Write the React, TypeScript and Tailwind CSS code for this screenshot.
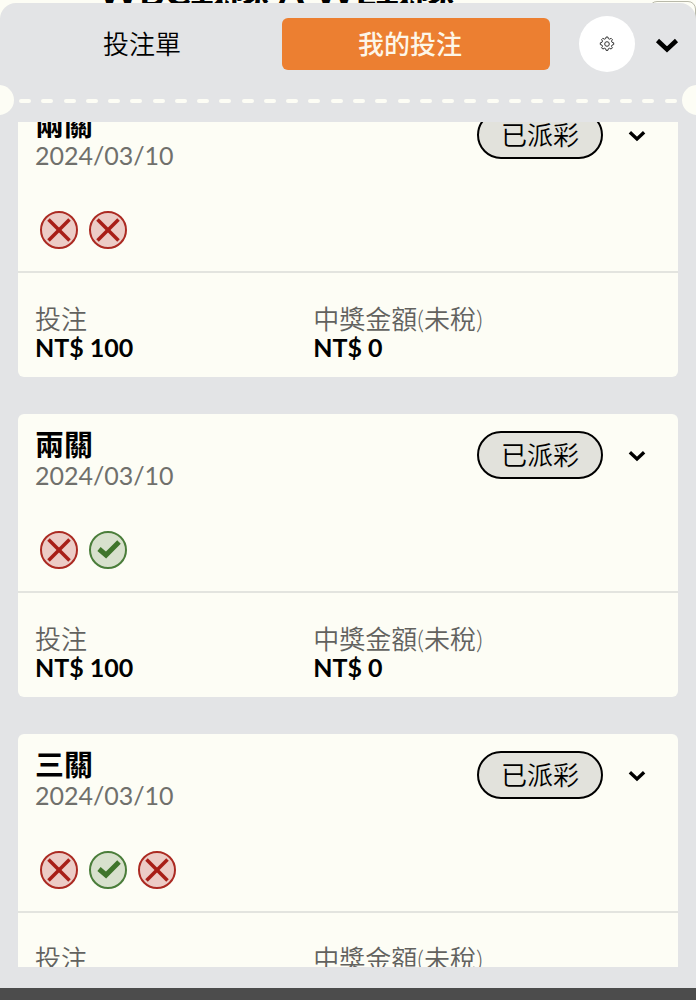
import { X } from "lucide-react";

type Result = "win" | "lose";

const bets: { title: string; date: string; stake: number; payout: number; results: Result[] }[] = [
  { title: "兩關", date: "2024/03/10", stake: 100, payout: 0, results: ["lose", "lose"] },
  { title: "兩關", date: "2024/03/10", stake: 100, payout: 0, results: ["lose", "win"] },
  { title: "三關", date: "2024/03/10", stake: 100, payout: 0, results: ["lose", "win", "lose"] },
];

function Chevron({ className }: { className: string }) {
  return (
    <svg viewBox="0 0 24 15" className={className} fill="none" stroke="currentColor" aria-hidden="true">
      <path d="M2.500 2.500l9.500 9 9.500-9" strokeWidth="4.500" />
    </svg>
  );
}

function GearIcon() {
  return (
    <svg viewBox="0 0 16 16" className="h-4 w-4" fill="none" stroke="#333" strokeWidth="1" aria-hidden="true">
      <circle cx="8" cy="8" r="2.3" />
      <path
        d="M7.1 1h1.8l.4 1.600 1.400.6 1.400-.9 1.300 1.300-.9 1.400.6 1.400 1.600.4v1.800l-1.600.4-.6 1.400.9 1.400-1.300 1.300-1.400-.9-1.400.6-.4 1.600H7.100l-.4-1.600-1.400-.6-1.400.9-1.300-1.300.9-1.400-.6-1.400L1.300 8.600V6.800l1.600-.4.6-1.400-.9-1.400 1.300-1.300 1.400.9 1.400-.6z"
        strokeLinejoin="round"
      />
    </svg>
  );
}

function ResultBadge({ result }: { result: Result }) {
  if (result === "win") {
    return (
      <li className="flex h-[38px] w-[38px] items-center justify-center rounded-full border-2 border-[#4a7d3a] bg-[#d8e1cd] text-[#3f752b]">
        <svg viewBox="0 0 34 34" className="h-[34px] w-[34px]" fill="none" stroke="currentColor" strokeWidth="5" aria-label="過關">
          <path d="M8 16l7 6L28 9" />
        </svg>
      </li>
    );
  }
  return (
    <li className="flex h-[38px] w-[38px] items-center justify-center rounded-full border-2 border-[#ab2a22] bg-[#ecccc6] text-[#a81e17]">
      <X className="h-[42px] w-[42px] shrink-0" strokeWidth={2} strokeLinecap="butt" aria-label="未過關" />
    </li>
  );
}

function BetCard({ bet }: { bet: (typeof bets)[number] }) {
  return (
    <article className="shrink-0 rounded-md bg-[#fdfdf5]">
      <div className="border-b-2 border-[#e3e4df] px-[17px] pt-[15px] pb-[22px]">
        <div className="flex items-start justify-between">
          <div>
            <h2 className="text-[29px] leading-8 font-bold">{bet.title}</h2>
            <p className="text-[25px] leading-7 text-[#70706c]">{bet.date}</p>
          </div>
          <div className="mt-0.5 flex items-center pr-[15px]">
            <span className="flex h-12 w-[126px] items-center justify-center rounded-full border-2 border-black bg-[#e2e2dc] text-[26px] leading-7 font-[350]">
              已派彩
            </span>
            <button type="button" aria-label="展開" className="ml-[25px] flex h-12 w-[18px] items-center">
              <Chevron className="mt-0.5 h-3 w-[18px]" />
            </button>
          </div>
        </div>
        <ul className="mt-[42px] flex gap-[11px] pl-[5px]">
          {bet.results.map((result, i) => (
            <ResultBadge key={i} result={result} />
          ))}
        </ul>
      </div>
      <dl className="grid grid-cols-[4fr_5fr] px-[17px] pt-8 pb-4">
        <div>
          <dt className="text-[26px] leading-7 font-[350] text-[#62625f]">投注</dt>
          <dd className="text-[25px] leading-7 font-bold">NT$ {bet.stake}</dd>
        </div>
        <div>
          <dt className="text-[26px] leading-7 font-[350] text-[#62625f]">中獎金額(未稅)</dt>
          <dd className="text-[25px] leading-7 font-bold">NT$ {bet.payout}</dd>
        </div>
      </dl>
    </article>
  );
}

export default function App() {
  return (
    <div className="relative flex h-screen flex-col overflow-hidden bg-[#fdfdf5] pt-[3px] font-[Lato,'Noto_Sans_CJK_TC',sans-serif] text-black">
      {/* page behind the sheet */}
      <p className="absolute bottom-full left-[98px] -mb-[11px] text-[39px] leading-10 font-bold whitespace-nowrap">
        WBC戰隊 Λ WL戰隊
      </p>
      <div className="absolute top-px right-0 h-8 w-[47px] rounded-lg border border-[#b9b9aa]" />

      <main className="relative flex min-h-0 flex-1 flex-col overflow-hidden rounded-t-2xl bg-[#e3e4e6]">
        <header className="flex items-center pt-[13px] pr-[17px] pl-3.5">
          <nav className="flex flex-1 text-[26px] leading-7">
            <button type="button" className="h-[52px] flex-1 rounded-md pr-3 font-[350]">
              投注單
            </button>
            <button type="button" className="h-[52px] flex-1 rounded-md bg-[#ec7f31] pr-3 font-medium text-[#fdf6e8]">
              我的投注
            </button>
          </nav>
          <button
            type="button"
            aria-label="設定"
            className="ml-[29px] flex h-14 w-14 items-center justify-center rounded-full bg-white"
          >
            <GearIcon />
          </button>
          <button type="button" aria-label="收合" className="ml-5 flex h-14 w-6 items-center">
            <Chevron className="mt-0.5 h-[15px] w-6" />
          </button>
        </header>

        <div className="relative mt-[13px] flex h-[30px] shrink-0 items-center px-[19px]">
          <span className="absolute top-0 -left-4 h-[30px] w-[30px] rounded-full bg-[#fdfdf5]" />
          <span className="absolute top-0 -right-4 h-[30px] w-[30px] rounded-full bg-[#fdfdf5]" />
          <div className="mt-0.5 flex flex-1 justify-between">
            {Array.from({ length: 30 }, (_, i) => (
              <span key={i} className="h-1 w-3 rounded-sm bg-[#fdfdf5]" />
            ))}
          </div>
        </div>

        <section className="mx-[18px] mt-[7px] mb-[21px] flex min-h-0 flex-1 flex-col overflow-hidden">
          <div className="-mt-7 flex flex-col gap-[37px]">
            {bets.map((bet, i) => (
              <BetCard key={i} bet={bet} />
            ))}
          </div>
        </section>
      </main>
      <footer className="h-3 shrink-0 bg-[#4c4c4c]" />
    </div>
  );
}
